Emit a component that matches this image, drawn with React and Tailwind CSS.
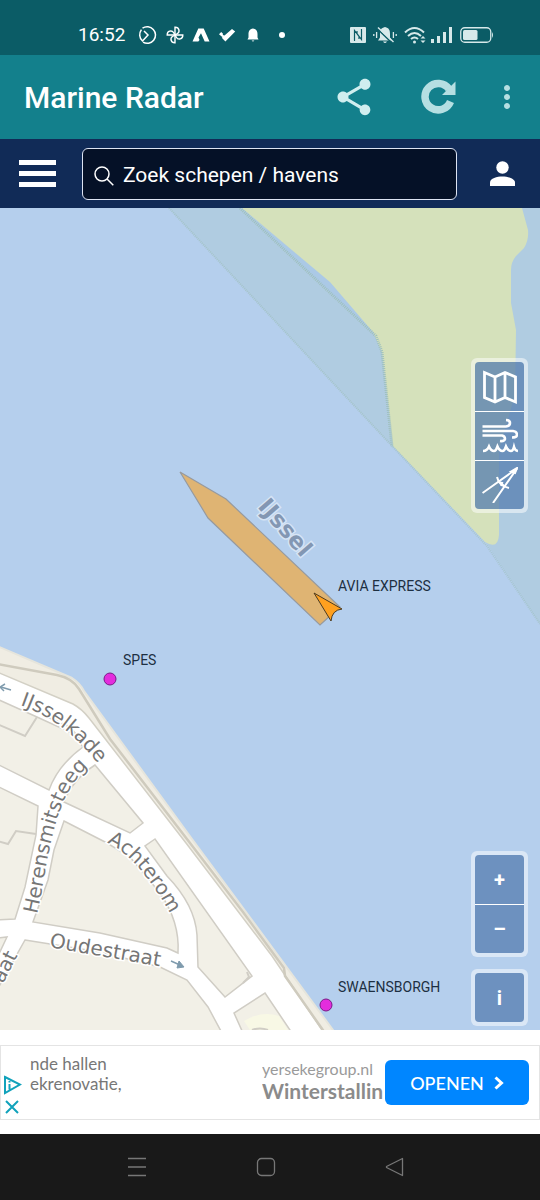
import { MdShare, MdMoreVert } from "react-icons/md";

// Building blocks between the streets, everything else on the quay is road
const blocks = [
  "M-3 699 L37 717 L72 733 L83 747 Q58 765 49 790 L-3 764 Z",
  "M95 765 L143 823 L130 833 L64 802 Q72 780 95 765 Z",
  "M-3 786 L38 806 L36 835 L25 887 L15 919 L-3 920 Z",
  "M64 821 L107 843 L130 857 L160 893 Q180 922 178 953 L167 948 L100 933 L33 922 L48 880 L54 850 Z",
  "M155 839 L145 846 L167 876 Q195 905 197 935 L198 967 L225 997 L252 976 Z",
  "M25 940 L100 952 L160 967 L187 980 L208 1007 L222 1033 L-3 1033 L-3 990 Z",
  "M265 993 L292 1033 L243 1033 L234 1013 Z",
  "M-3 938 L7 937 L-3 958 Z",
];

const ships = [
  { name: "SPES", x: 110, y: 679, labelX: 123, labelY: 665 },
  { name: "SWAENSBORGH", x: 326, y: 1005, labelX: 338, labelY: 992 },
];

const streets = [
  { id: "ijsselkade", name: "IJsselkade", d: "M20 705 Q76 724 116 790" },
  { id: "herensmitsteeg", name: "Herensmitsteeg", d: "M37 914 C48 870 50 792 94 762" },
  { id: "achterom", name: "Achterom", d: "M107 843 Q143 858 182 936" },
  { id: "oudestraat", name: "Oudestraat", d: "M49 947 L186 971" },
];

function StatusBar() {
  return (
    <div className="flex h-[55px] items-center bg-[#0b5c66] pt-[14px] pr-[46px] pl-[78px] text-white">
      <span className="text-[19px] leading-6">16:52</span>
      <div className="ml-[13px] flex items-center gap-2">
        <svg className="h-5 w-5" viewBox="0 0 20 20" fill="none" stroke="currentColor" strokeWidth="1.5">
          <path d="M4.5 3.2 A8.3 8.3 0 1 1 5 17.2" />
          <path d="M6 6 L10 10 L4.5 16 C1 13 1 8 3.4 4.6" />
        </svg>
        <svg className="h-[18px] w-[18px]" viewBox="0 0 18 18" fill="none" stroke="currentColor" strokeWidth="1.4">
          <path d="M9 9 V1.2 C13.5 1 14 6 11.5 7.5 L9 9" />
          <path d="M9 9 H16.8 C17 13.5 12 14 10.5 11.5 L9 9" />
          <path d="M9 9 V16.8 C4.5 17 4 12 6.5 10.5 L9 9" />
          <path d="M9 9 H1.2 C1 4.5 6 4 7.5 6.5 L9 9" />
        </svg>
        <svg className="h-[18px] w-[18px]" viewBox="0 0 18 18" fill="currentColor">
          <path d="M6.3 2.5 H11.7 L17.5 15.5 H12.7 L9 7.2 L6.5 11.5 L7.5 14 L6.3 15.5 H0.5 Z" />
        </svg>
        <svg className="h-[18px] w-[18px]" viewBox="0 0 18 18" fill="currentColor">
          <path d="M1 8.2 L3.2 6 L5 7.8 L4.8 9 L6.5 9.6 L14 3 L17.2 5.6 L7.4 15.4 L3.8 11.8 L4.6 10.9 L3.6 10.6 Z" />
        </svg>
        <svg className="h-[18px] w-[18px]" viewBox="0 0 18 18" fill="currentColor">
          <path d="M9 2.5 C12.5 3 13.5 5.5 13.5 8 V11.5 L14.5 13.5 H3.5 L4.5 11.5 V8 C4.5 5.5 5.5 3 9 2.5 Z M7.6 14.4 H10.4 Q9 16.6 7.6 14.4 Z" />
        </svg>
      </div>
      <span className="ml-[17px] h-[6px] w-[6px] rounded-full bg-white" />
      <div className="ml-auto flex items-center gap-[7px] text-[#d7e9ea]">
        <svg className="h-4 w-4" viewBox="0 0 16 16">
          <rect x="0" y="0" width="16" height="16" rx="1" fill="currentColor" />
          <path d="M4 13.5 H4.5 V3.5 L9 9.5 V12 M12 2.5 H11.5 V12.5 L7 6.5 V4" fill="none" stroke="#0b5c66" strokeWidth="1.2" />
        </svg>
        <svg className="h-[18px] w-6" viewBox="0 0 24 18" fill="currentColor">
          <path d="M12 1 C16 2 17 4 17 8 V11.5 L19 14.5 H5 L7 11.5 V8 C7 4 8 2 12 1 Z M10 15.4 H14 Q12 18.5 10 15.4 Z" />
          <path d="M4.5 3 L19 17" stroke="#0b5c66" strokeWidth="1.5" />
          <path d="M5 1.5 L20.5 16" stroke="currentColor" strokeWidth="1.4" />
          <path d="M0.8 8 V10 M3.6 6 V12 M20.4 6 V12 M23.2 8 V10" stroke="currentColor" strokeWidth="1.3" />
        </svg>
        <svg className="h-[18px] w-[22px]" viewBox="0 0 22 18" fill="none" stroke="currentColor" strokeWidth="2">
          <path d="M1 6.5 Q10.5 -2.5 20 6.5" />
          <path d="M4 10 Q10.5 4 17 10" />
          <path d="M7 13 Q10.5 10 14 13" />
          <circle cx="10.5" cy="16" r="1.5" fill="currentColor" stroke="none" />
          <path d="M16.5 12.5 L19 10 L21.5 12.5 Z M16.5 14.5 L19 17 L21.5 14.5 Z" fill="currentColor" stroke="none" />
        </svg>
        <svg className="-ml-0.5 h-4 w-[22px]" viewBox="0 0 22 16" fill="currentColor">
          <rect x="0" y="12" width="3" height="4" />
          <rect x="6" y="9" width="3" height="7" />
          <rect x="12" y="5" width="3" height="11" />
          <rect x="18" y="0" width="3" height="16" />
        </svg>
        <svg className="h-4 w-[34px]" viewBox="0 0 34 16">
          <rect x="0.75" y="0.75" width="30" height="14.5" rx="4" fill="none" stroke="currentColor" strokeWidth="1.3" />
          <rect x="3" y="3" width="14.5" height="10" rx="1.5" fill="currentColor" />
          <path d="M32 5 Q34 8 32 11 Z" fill="currentColor" />
        </svg>
      </div>
    </div>
  );
}

function AppBar() {
  return (
    <header className="flex h-[84px] items-center bg-[#13808c] pr-[15px] pl-6 text-[#b5dfe2]">
      <h1 className="pt-0.5 text-[30px] leading-8 font-medium text-white">Marine Radar</h1>
      <div className="ml-auto flex items-center">
        <button type="button" aria-label="Share" className="text-[#d0eeef]">
          <MdShare className="h-11 w-11" />
        </button>
        <button type="button" aria-label="Refresh" className="ml-[45px]">
          <svg className="h-9 w-9" viewBox="0 0 36 36">
            <path d="M28 10 A13.2 13.2 0 1 0 29.5 22.5" fill="none" stroke="currentColor" strokeWidth="7.5" />
            <path d="M34.5 2.5 V16 H21 Z" fill="currentColor" />
          </svg>
        </button>
        <button type="button" aria-label="More options" className="ml-8">
          <MdMoreVert className="h-9 w-9" />
        </button>
      </div>
    </header>
  );
}

function SearchBar() {
  return (
    <nav className="flex h-[69px] items-center bg-[#112b57] px-[19px] text-white">
      <button type="button" aria-label="Menu" className="flex w-[37px] flex-col gap-[6px]">
        <span className="h-[5px] bg-white" />
        <span className="h-[5px] bg-white" />
        <span className="h-[5px] bg-white" />
      </button>
      <label className="ml-[26px] flex h-[52px] flex-1 items-center rounded-md border border-[#dde4f3] bg-[#051127] pl-[11px]">
        <svg className="mt-1 h-5 w-5 shrink-0" viewBox="0 0 20 20" fill="none" stroke="currentColor" strokeWidth="1.5">
          <circle cx="8" cy="8" r="7" />
          <path d="M13 13 L19.3 19.3" />
        </svg>
        <input
          type="text"
          aria-label="Zoek schepen / havens"
          placeholder="Zoek schepen / havens"
          className="ml-[9px] w-full min-w-0 bg-transparent pt-0.5 text-[21px] leading-7 outline-none placeholder:text-white"
        />
      </label>
      <button type="button" aria-label="Account" className="mr-[6px] ml-[33px]">
        <svg className="h-[25px] w-[25px]" viewBox="0 0 25 25" fill="currentColor">
          <circle cx="12.5" cy="6.5" r="6.2" />
          <path d="M0 25 V21.5 C0 17.5 7 15.6 12.5 15.6 C18 15.6 25 17.5 25 21.5 V25 Z" />
        </svg>
      </button>
    </nav>
  );
}

function ChartDrawing() {
  return (
    <svg
      className="absolute inset-0 h-full w-full"
      viewBox="0 208 540 822"
      preserveAspectRatio="xMidYMid slice"
    >
      <rect x="0" y="208" width="540" height="822" fill="#b5cfed" />

      {/* Nature reserve */}
      <path d="M169 208 L393 447 L487 544 L540 624 V208 Z" fill="#b0cce1" />
      <path d="M240 208 L376 336 L330 282 Z" fill="#abc9e6" />
      <path
        d="M242 208 L330 282 L373 332 L382 352 L393 446 L485 542 Q498 550 499 535 V450 L515 395 L516 330 L511 303 V270 Q511 262 516 256 L524 248 Q529 240 528 230 L522 208 Z"
        fill="#d5e1bb"
      />
      <g fill="none" stroke="#9fc0bd" strokeDasharray="1 1">
        <path d="M169 208 L393 447" strokeWidth="2" opacity="0.7" />
        <path d="M240 208 L376 336 L382 352 L392 446" strokeWidth="3" />
        <path d="M393 447 L487 546 L540 624" strokeWidth="2" opacity="0.6" />
      </g>

      {/* Quay and streets */}
      <path d="M-3 646 L72 678 Q80 683 84 691 L192 839 L333 1030 V1033 H-3 Z" fill="#f0ede3" stroke="#e6e5dc" strokeWidth="2" />
      <path d="M-3 672 L73 704 Q82 709 89 718 L186 843 L272 956 L324 1033 H-3 Z" fill="#fff" stroke="#d3d0c5" strokeWidth="1.5" />
      <path d="M-3 664 L57 675 Q72 678 79 689 L110 739 L190 843 L243 912 L284 968 L285 976 L325 1033" fill="none" stroke="#cfcbbe" strokeWidth="2.5" />
      <g fill="#f2f0e7" stroke="#d0cdc5" strokeWidth="1.5">
        {blocks.map((d) => (
          <path key={d} d={d} />
        ))}
      </g>
      <path d="M244 1021 Q262 1010 279 1016 L288 1030 H250 Z" fill="#f8f8e5" />
      <g fill="none" stroke="#d0cdc5" strokeWidth="2">
        <path d="M-3 724 L25 736 L37 717" />
        <path d="M-3 841 L8 844 L16 831 L36 834" />
        <path d="M48 717 L70 727 L82 742" />
        <path d="M247 972 L249 977 L243 983 M252 1030 Q260 1027 268 1030" />
      </g>

      <g fill="none" stroke="#7f9bad" strokeWidth="1.5">
        <path d="M11 690 L1 687 M171 961 L180 965" />
        <path d="M5 684 L0 687 L4 691" />
        <path d="M179 961 L184 967 L177 968 Z" fill="#7f9bad" strokeWidth="1" />
      </g>

      <g
        className="font-['DejaVu_Sans']"
        fontSize="20"
        fill="#767676"
        stroke="#fff"
        strokeWidth="3"
        paintOrder="stroke"
      >
        {streets.map((street) => (
          <text key={street.id}>
            <path id={street.id} d={street.d} />
            <textPath href={`#${street.id}`}>{street.name}</textPath>
          </text>
        ))}
        <text transform="translate(3 984) rotate(-63)">aat</text>
      </g>
      <text
        className="font-['DejaVu_Sans']"
        transform="translate(257 507) rotate(49)"
        fontSize="23"
        fontWeight="700"
        fill="#8397b3"
        stroke="#d6e4f5"
        strokeWidth="3"
        paintOrder="stroke"
      >
        IJssel
      </text>

      {/* Vessels */}
      <path
        d="M180 472 L226 499 L340 607 L320 625 L208 518 Z"
        fill="#dfb473"
        stroke="#979a9e"
        strokeWidth="1.2"
      />
      <path d="M314 593 L342 609 Q332 610 331 621 Z" fill="#ffa01f" stroke="#4b3a20" strokeWidth="1" />
      <g fontSize="14" fill="#1d2f42">
        <text x="338" y="591">AVIA EXPRESS</text>
        {ships.map((ship) => (
          <g key={ship.name}>
            <circle cx={ship.x} cy={ship.y} r="6" fill="#e32ddd" stroke="#7a1b86" />
            <text x={ship.labelX} y={ship.labelY}>
              {ship.name}
            </text>
          </g>
        ))}
      </g>
    </svg>
  );
}

function ControlGroup({ children }) {
  return <div className="flex flex-col rounded-md bg-white/50 p-1">{children}</div>;
}

function ControlButton({ label, children }) {
  return (
    <button
      type="button"
      aria-label={label}
      className="flex h-[49px] w-[49px] items-center justify-center border-white bg-[#003c88]/50 bg-clip-padding text-xl leading-6 font-bold text-white not-first:border-t first:rounded-t-sm last:rounded-b-sm"
    >
      {children}
    </button>
  );
}

function MapView() {
  return (
    <main className="relative min-h-[600px] flex-1 overflow-hidden">
      <ChartDrawing />
      <div className="absolute top-[150px] right-3">
        <ControlGroup>
          <ControlButton label="Map layers">
            <svg className="h-9 w-9" viewBox="0 0 36 36" fill="none" stroke="currentColor" strokeWidth="2.8">
              <path d="M2.5 3.5 L13 8 L23 3.5 L33.5 8 V33 L23 28.5 L13 33 L2.5 28.5 Z M13 8 V33 M23 3.5 V28.5" />
            </svg>
          </ControlButton>
          <ControlButton label="Wind and waves">
            <svg className="h-9 w-9" viewBox="0 0 36 36" fill="none" stroke="currentColor" strokeWidth="2.6">
              <path d="M0.5 8.5 H24 Q28 8 28 5 Q28 2.2 24 2" />
              <path d="M0.5 13 H31 Q35 13.5 35 17 Q34.5 19.5 30 19.5" />
              <path d="M0.5 17.5 H20 Q23 18 23 21 Q22.5 23.5 18 23" />
              <path d="M1 33 Q5 33 7 28.5 Q9 33 12 33 Q14 33 15.5 28.5 Q17.5 33 20.5 33 Q22.5 33 24 28.5 Q26 33 29 33 Q31 33 32 29 Q33 32.5 36 33" />
            </svg>
          </ControlButton>
          <ControlButton label="Measure distance">
            <svg className="h-9 w-9" viewBox="0 0 36 36" fill="none" stroke="currentColor" strokeWidth="2">
              <path d="M0.5 26 L35 1.5 L11 36" />
              <path d="M29 4.5 L35 1 L33 6 Z" fill="currentColor" />
              <path d="M15 10 Q17 19 27 21 M18 15 L23 20 M20.5 15 L19 19" />
            </svg>
          </ControlButton>
        </ControlGroup>
      </div>
      <div className="absolute right-3 bottom-1 flex flex-col gap-3">
        <ControlGroup>
          <ControlButton label="Zoom in">+</ControlButton>
          <ControlButton label="Zoom out">–</ControlButton>
        </ControlGroup>
        <ControlGroup>
          <ControlButton label="Information">i</ControlButton>
        </ControlGroup>
      </div>
    </main>
  );
}

function AdBanner() {
  return (
    <aside className="bg-white pt-[15px] pb-[14px] font-['Lato',sans-serif]">
      <div className="flex h-[75px] items-center overflow-hidden border border-[#e4e4e4] pr-[10px] whitespace-nowrap">
        <div className="flex w-[22px] flex-col items-center gap-1 self-end pb-1 text-[#11a2bb]">
          <svg className="h-5 w-5" viewBox="0 0 20 20" fill="none" stroke="currentColor" strokeWidth="2">
            <path d="M3 2 L18 9.5 L3 18 Z M7.5 9 V14.5 M7.5 6 V7.5" />
          </svg>
          <button type="button" aria-label="Close ad">
            <svg className="h-4 w-4" viewBox="0 0 16 16" fill="none" stroke="currentColor" strokeWidth="2">
              <path d="M2 2 L14 14 M14 2 L2 14" />
            </svg>
          </button>
        </div>
        <p className="ml-[7px] self-start pt-2 text-[17px] leading-5 text-[#777]">
          nde hallen
          <br />
          ekrenovatie,
        </p>
        <div className="ml-auto w-[123px] overflow-hidden pb-1">
          <p className="text-base leading-5 text-[#9a9a9a]">yersekegroup.nl</p>
          <p className="text-[21px] leading-6 font-bold text-[#8b8b8b]">Winterstallin</p>
        </div>
        <button
          type="button"
          className="flex h-[45px] w-36 items-center justify-center gap-[10px] rounded-md bg-[#0086ff] text-lg font-medium text-white"
        >
          OPENEN
          <svg className="h-[14px] w-[10px]" viewBox="0 0 10 14" fill="none" stroke="currentColor" strokeWidth="3">
            <path d="M1.5 1.5 L7.5 7 L1.5 12.5" />
          </svg>
        </button>
      </div>
    </aside>
  );
}

function SystemNav() {
  return (
    <footer className="flex h-[66px] items-center justify-center gap-[109px] bg-[#191919] pr-[9px] text-[#777]">
      <button type="button" aria-label="Recent apps">
        <svg className="h-5 w-5" viewBox="0 0 20 20" stroke="currentColor" strokeWidth="1.3">
          <path d="M1 1.5 H19 M1 10 H19 M1 18.5 H19" />
        </svg>
      </button>
      <button type="button" aria-label="Home">
        <svg className="h-5 w-5" viewBox="0 0 20 20" fill="none" stroke="currentColor" strokeWidth="1.3">
          <rect x="1.5" y="1.5" width="17" height="17" rx="4" />
        </svg>
      </button>
      <button type="button" aria-label="Back">
        <svg className="h-5 w-5" viewBox="0 0 20 20" fill="none" stroke="currentColor" strokeWidth="1.3" strokeLinejoin="round">
          <path d="M17.5 1.5 V18.5 L1.5 10.5 V9.5 Z" />
        </svg>
      </button>
    </footer>
  );
}

export default function App() {
  return (
    <div className="flex min-h-screen flex-col font-['Roboto',sans-serif]">
      <StatusBar />
      <AppBar />
      <SearchBar />
      <MapView />
      <AdBanner />
      <SystemNav />
    </div>
  );
}
